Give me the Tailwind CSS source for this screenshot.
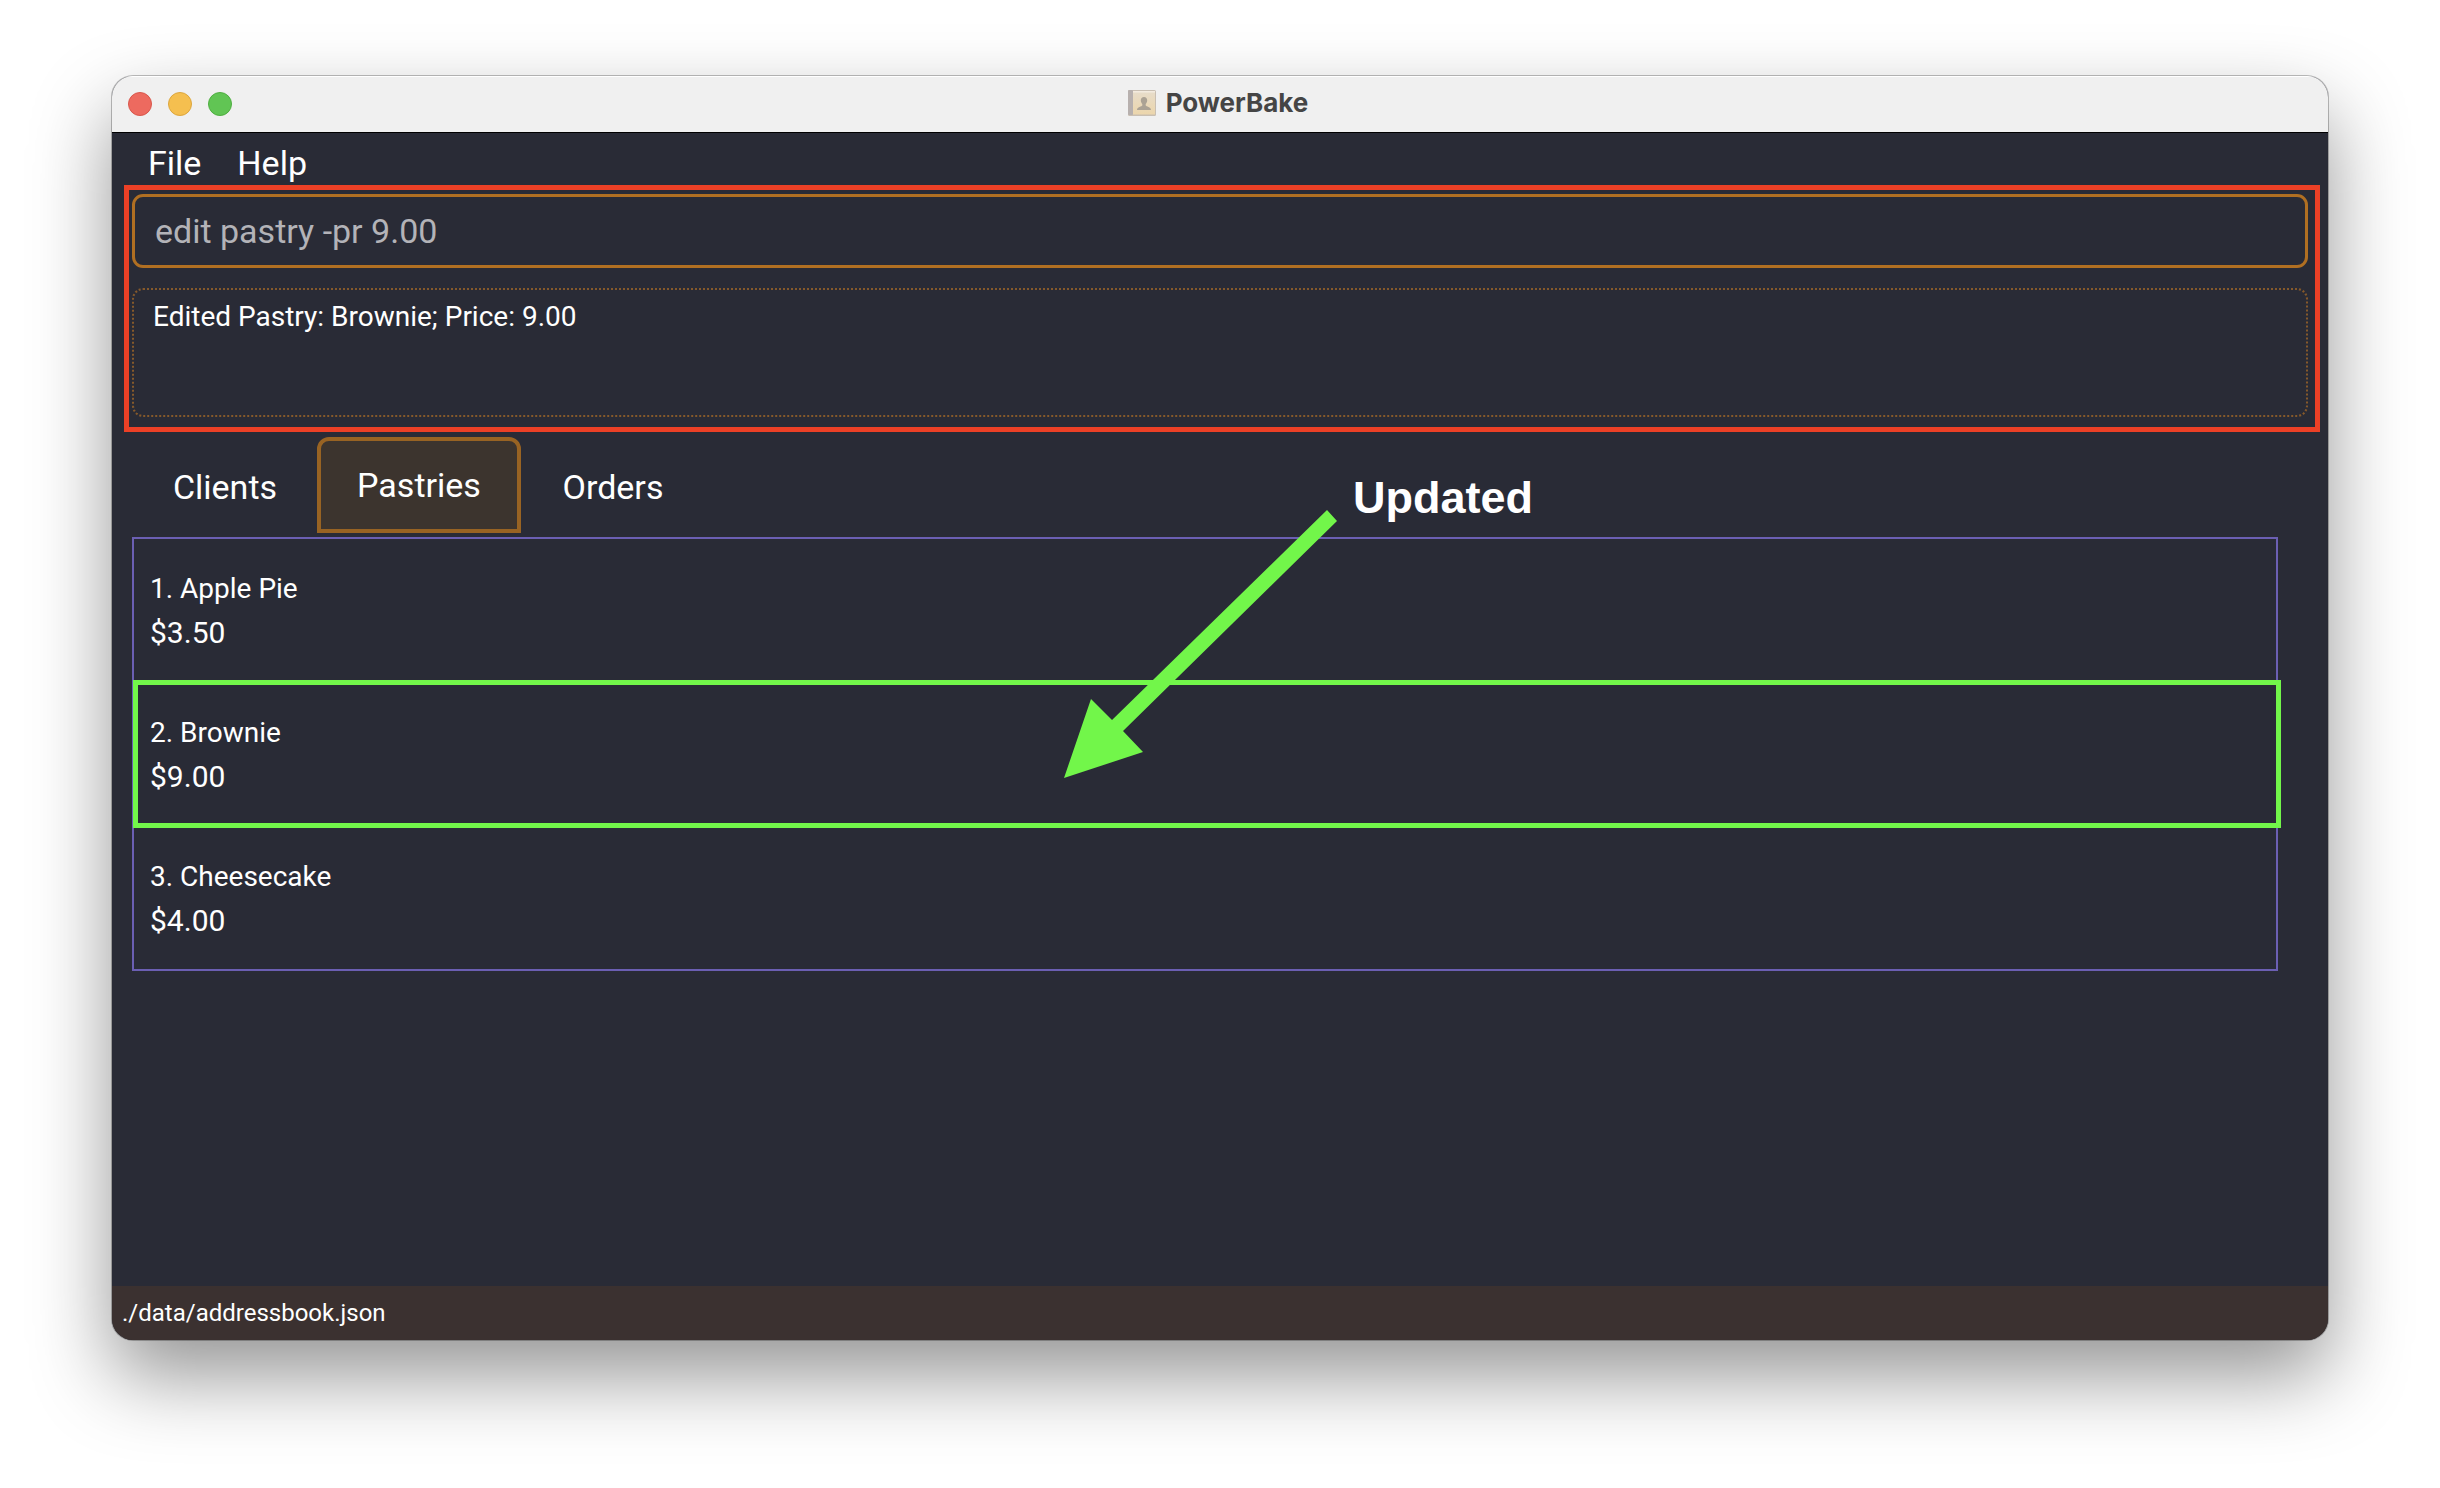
<!DOCTYPE html>
<html lang="en">
<head>
<meta charset="utf-8">
<title>PowerBake</title>
<script src="https://cdn.jsdelivr.net/npm/@tailwindcss/browser@4"></script>
</head>
<body class="flex min-h-screen flex-col bg-white px-[112px] pt-[76px] pb-[148px] font-['Roboto',sans-serif] text-white">
  <div class="flex flex-1 flex-col overflow-hidden rounded-[21px] bg-[#292b36] shadow-[0_0_0_1px_rgba(0,0,0,0.25),0_36px_80px_rgba(0,0,0,0.42)]">

    <!-- Title bar -->
    <header class="relative flex h-[57px] items-center justify-center border-b border-black bg-[#f0f0f0] shadow-[inset_0_1px_0_white]">
      <div class="absolute left-4 flex gap-4">
        <button type="button" aria-label="Close" class="size-6 rounded-full border border-[#d8574c] bg-[#ed6a5f]"></button>
        <button type="button" aria-label="Minimize" class="size-6 rounded-full border border-[#dca63e] bg-[#f5bf4f]"></button>
        <button type="button" aria-label="Zoom" class="size-6 rounded-full border border-[#4fae41] bg-[#61c554]"></button>
      </div>
      <div class="flex items-center gap-2.5 pr-1 pb-0.5">
        <svg class="h-7 w-7" viewBox="0 0 28 28" aria-hidden="true">
          <defs>
            <linearGradient id="cover" x1="0" y1="0" x2="0" y2="1">
              <stop offset="0" stop-color="#e7dcc9"/>
              <stop offset="1" stop-color="#ecd6ac"/>
            </linearGradient>
          </defs>
          <rect x="0" y="1" width="28" height="26" rx="1.500" fill="#c9bfb2"/>
          <rect x="0" y="1" width="5" height="25" rx="1" fill="#b7b0ae"/>
          <rect x="5" y="3" width="22" height="22.500" fill="url(#cover)"/>
          <rect x="5" y="2" width="22" height="1.500" fill="#f3ebdf"/>
          <path d="M16 8c-2 0-3.200 1.300-3.200 3.300 0 1.500.6 2.900 1.500 3.700v1.500c-.5 1-5.300 1.300-5.300 4.500h14c0-3.200-4.800-3.500-5.300-4.500V15c.9-.8 1.500-2.200 1.500-3.700C19.200 9.300 18 8 16 8z" fill="#aba294"/>
        </svg>
        <h1 class="font-['Inter',sans-serif] text-[26px] leading-8 font-bold text-[#454545]">PowerBake</h1>
      </div>
    </header>

    <!-- Menu bar -->
    <nav class="flex h-[52px] items-center px-[18px] pt-2 text-[34px] leading-10">
      <button type="button" class="px-[18px]">File</button>
      <button type="button" class="px-[18px]">Help</button>
    </nav>

    <!-- Command and result -->
    <section class="mr-2 ml-3 flex flex-col gap-5 border-5 border-[#ec4026] pt-1 pr-[7px] pb-[10px] pl-[3px]">
      <input type="text" aria-label="Command" value="edit pastry -pr 9.00" class="h-[74px] w-full rounded-[11px] border-3 border-[#b06f22] bg-transparent px-5 text-[34px] leading-10 text-[#b3b3b8]">
      <textarea readonly aria-label="Result" class="block h-[129px] w-full resize-none rounded-[11px] border-2 border-dotted border-[#85592b] bg-transparent px-[19px] py-[9px] text-[28px] leading-9">Edited Pastry: Brownie; Price: 9.00</textarea>
    </section>

    <!-- Tabs -->
    <div role="tablist" class="mt-[5px] mb-1 flex h-24 px-[21px] text-[34px] leading-10">
      <button type="button" role="tab" aria-selected="false" class="w-[184px] pt-1">Clients</button>
      <button type="button" role="tab" aria-selected="true" class="w-[204px] rounded-t-xl border-4 border-[#986323] bg-[#3c342e]">Pastries</button>
      <button type="button" role="tab" aria-selected="false" class="w-[184px] pt-1">Orders</button>
    </div>

    <!-- Pastry list -->
    <main class="relative flex-1 pr-[50px] pl-5">
      <ul class="border-2 border-[#6b5fb3] text-[28px] leading-[44px]">
        <li class="px-4 pt-7 pb-7">
          <p>1. Apple Pie</p>
          <p class="text-[30px] leading-[44px]">$3.50</p>
        </li>
        <li class="relative px-4 pt-7 pb-7">
          <div class="absolute -top-[3px] -right-[5px] -bottom-px -left-px border-5 border-[#72f64a]"></div>
          <p>2. Brownie</p>
          <p class="text-[30px] leading-[44px]">$9.00</p>
        </li>
        <li class="px-4 pt-7 pb-[26px]">
          <p>3. Cheesecake</p>
          <p class="text-[30px] leading-[44px]">$4.00</p>
        </li>
      </ul>

      <!-- Callout pointing at the changed row -->
      <div class="absolute -top-[64px] left-1/2 ml-[-156px] flex items-start gap-4">
        <svg class="mt-[37px] h-[269px] w-[273px]" viewBox="0 0 273 269" aria-hidden="true">
          <polygon points="0,268 27,189 48,210 263,0 273,11 59,221 79,242" fill="#72f64a"/>
        </svg>
        <p class="pt-px font-['Liberation_Sans',sans-serif] text-[45px] leading-[48px] font-bold">Updated</p>
      </div>
    </main>

    <footer class="flex h-[54px] items-center bg-[#3b3130] px-[10px] text-[24px] leading-8">./data/addressbook.json</footer>
  </div>
</body>
</html>
